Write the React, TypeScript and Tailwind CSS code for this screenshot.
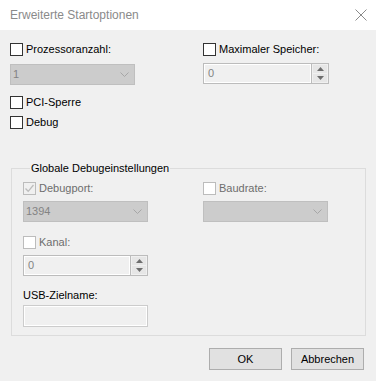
import React from "react";

const font = { fontFamily: '"Liberation Sans", Arial, sans-serif' };

function Box({ checked, disabled }: { checked?: boolean; disabled?: boolean }) {
  return (
    <span
      className={
        "flex h-[13px] w-[13px] shrink-0 items-center justify-center border " +
        (disabled ? "border-[#bcbcbc] " : "border-[#333333] ") +
        (checked && disabled ? "bg-[#f0f0f0]" : "bg-white")
      }
    >
      {checked && (
        <svg width="11" height="11" viewBox="0 0 11 11">
          <path d="M1.5 5.5 L4.2 8.3 L9.5 2" fill="none" stroke="#bcbcbc" strokeWidth="1.3" />
        </svg>
      )}
    </span>
  );
}

function Check({ label, checked, disabled }: { label: string; checked?: boolean; disabled?: boolean }) {
  return (
    <div className="flex h-[13px] items-center gap-[3px]">
      <Box checked={checked} disabled={disabled} />
      <span className={"text-[11px] leading-none " + (disabled ? "text-[#6d6d6d]" : "text-[#000]")}>{label}</span>
    </div>
  );
}

function Chevron() {
  return (
    <svg width="9" height="5" viewBox="0 0 9 5">
      <path d="M0.5 0.5 L4.5 4.5 L8.5 0.5" fill="none" stroke="#a6a6a6" strokeWidth="1" />
    </svg>
  );
}

function Combo({ value }: { value?: string }) {
  return (
    <div className="flex h-[21px] w-[125px] items-center justify-between border border-[#bfbfbf] bg-[#cccccc] pl-[2px] pr-[5px]">
      <span className="text-[11px] text-[#838383]">{value}</span>
      <Chevron />
    </div>
  );
}

function Arrow({ up }: { up?: boolean }) {
  return (
    <svg width="7" height="4" viewBox="0 0 7 4">
      <path d={up ? "M0 4 L3.5 0 L7 4 Z" : "M0 0 L3.5 4 L7 0 Z"} fill="#6d6d6d" />
    </svg>
  );
}

function Spin({ value, w }: { value: string; w: string }) {
  return (
    <div className={"flex h-[21px] border border-[#bcbcbc] bg-[#f0f0f0] " + w}>
      <div className="flex flex-1 items-center border border-white pl-[3px] text-[11px] text-[#838383]">{value}</div>
      <div className="flex w-[17px] flex-col gap-[1px] border-l border-[#bcbcbc] bg-[#f0f0f0] p-[1px]">
        <div className="flex flex-1 items-center justify-center bg-[#e6e6e6]">
          <Arrow up />
        </div>
        <div className="flex flex-1 items-center justify-center bg-[#e6e6e6]">
          <Arrow />
        </div>
      </div>
    </div>
  );
}

function Button({ label }: { label: string }) {
  return (
    <button className="h-[22px] w-[73px] border border-[#adadad] bg-[#e1e1e1] text-[11px] text-black">
      {label}
    </button>
  );
}

export default function App() {
  return (
    <div className="flex h-[381px] w-[376px] flex-col bg-[#f0f0f0]" style={font}>
      <div className="flex h-[30px] items-center justify-between bg-white pl-[10px] pr-[9px]">
        <span className="text-[12px] text-[#8a8a8a]">Erweiterte Startoptionen</span>
        <svg width="12" height="12" viewBox="0 0 12 12">
          <path d="M0.5 0.5 L11.5 11.5 M11.5 0.5 L0.5 11.5" stroke="#8a8a8a" strokeWidth="1" />
        </svg>
      </div>

      <div className="flex flex-col px-[10px] pt-[13px]">
        <div className="flex">
          <div className="flex w-[193px] flex-col gap-[8px]">
            <Check label="Prozessoranzahl:" />
            <Combo value="1" />
          </div>
          <div className="flex flex-col gap-[7px]">
            <Check label="Maximaler Speicher:" />
            <Spin value="0" w="w-[126px]" />
          </div>
        </div>

        <div className="mt-[11px] flex flex-col gap-[7px]">
          <Check label="PCI-Sperre" />
          <Check label="Debug" />
        </div>

        <fieldset className="mt-[31px] ml-[1px] w-[355px] border border-[#dcdcdc] pb-[8px] pl-[11px]">
          <legend className="ml-[7px] px-[1px] text-[11px] leading-[16px] text-black">Globale Debugeinstellungen</legend>
          <div className="mt-[6px] flex">
            <div className="flex w-[180px] flex-col gap-[6px]">
              <Check label="Debugport:" checked disabled />
              <Combo value="1394" />
            </div>
            <div className="flex flex-col gap-[6px]">
              <Check label="Baudrate:" disabled />
              <Combo />
            </div>
          </div>
          <div className="mt-[14px] flex flex-col gap-[6px]">
            <Check label="Kanal:" disabled />
            <Spin value="0" w="w-[125px]" />
          </div>
          <div className="mt-[11px] text-[11px] leading-[16px] text-black">USB-Zielname:</div>
          <div className="mt-[2px] h-[22px] w-[125px] border border-[#cccccc] bg-[#f0f0f0]">
            <div className="h-full w-full border border-white" />
          </div>
        </fieldset>

        <div className="mt-[12px] flex justify-end gap-[9px] pr-[2px]">
          <Button label="OK" />
          <Button label="Abbrechen" />
        </div>
      </div>
    </div>
  );
}
